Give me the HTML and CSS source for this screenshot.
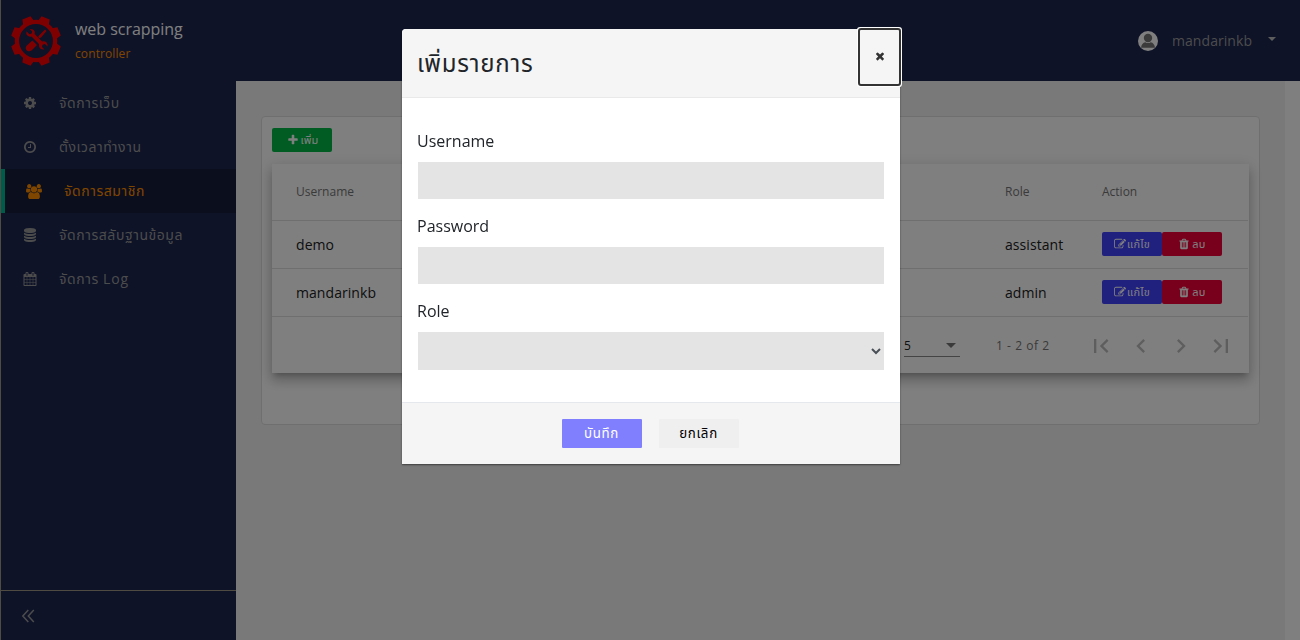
FILE: index.html
```html
<!DOCTYPE html>
<html lang="th">
<head>
<meta charset="utf-8">
<title>web scrapping</title>
<link rel="stylesheet" href="styles.css">
</head>
<body>
<svg class="defs" width="0" height="0">
  <symbol id="cog" viewBox="0 0 1792 1792"><path d="M1152 896q0-106-75-181t-181-75-181 75-75 181 75 181 181 75 181-75 75-181zm512-109v222q0 12-8 23t-20 13l-185 28q-19 54-39 91 35 50 107 138 10 12 10 25t-9 23q-27 37-99 108t-94 71q-12 0-26-9l-138-108q-44 23-91 38-16 136-29 186-7 28-36 28h-222q-14 0-24.5-8.5t-11.5-21.5l-28-184q-49-16-90-37l-141 107q-10 9-25 9-14 0-25-11-126-114-165-168-7-10-7-23 0-12 8-23 15-21 51-66.5t54-70.5q-27-50-41-99l-183-27q-13-2-21-12.5t-8-23.5v-222q0-12 8-23t19-13l186-28q14-46 39-92-40-57-107-138-10-12-10-24 0-10 9-23 26-36 98.5-107.5t94.5-71.5q13 0 26 10l138 107q44-23 91-38 16-136 29-186 7-28 36-28h222q14 0 24.5 8.5t11.5 21.5l28 184q49 16 90 37l142-107q9-9 24-9 13 0 25 10 129 119 165 170 7 8 7 22 0 12-8 23-15 21-51 66.5t-54 70.5q26 50 41 98l183 28q13 2 21 12.5t8 23.5z"/></symbol>
  <symbol id="clock" viewBox="0 0 1792 1792"><path d="M1024 544v448q0 14-9 23t-23 9h-320q-14 0-23-9t-9-23v-64q0-14 9-23t23-9h224v-352q0-14 9-23t23-9h64q14 0 23 9t9 23zm416 352q0-148-73-273t-198-198-273-73-273 73-198 198-73 273 73 273 198 198 273 73 273-73 198-198 73-273zm224 0q0 209-103 385.5t-279.5 279.5-385.5 103-385.5-103-279.5-279.5-103-385.5 103-385.5 279.5-279.5 385.5-103 385.5 103 279.5 279.5 103 385.5z"/></symbol>
  <symbol id="users" viewBox="-64 0 1920 1792"><path d="M529 896q-162 5-265 128h-134q-82 0-138-40.5t-56-118.5q0-353 124-353 6 0 43.5 21t97.5 42.5 119 21.5q67 0 133-23-5 37-5 66 0 139 81 256zm1071 637q0 120-73 189.5t-194 69.5h-874q-121 0-194-69.5t-73-189.5q0-53 3.5-103.5t14-109 26.5-108.5 43-97.5 62-81 85.5-53.5 111.5-20q10 0 43 21.5t73 48 107 48 135 21.5 135-21.5 107-48 73-48 43-21.5q61 0 111.5 20t85.5 53.5 62 81 43 97.5 26.5 108.5 14 109 3.5 103.5zm-1024-1277q0 106-75 181t-181 75-181-75-75-181 75-181 181-75 181 75 75 181zm704 384q0 159-112.5 271.5t-271.5 112.5-271.5-112.5-112.5-271.5 112.5-271.5 271.5-112.5 271.5 112.5 112.5 271.5zm576 225q0 78-56 118.5t-138 40.5h-134q-103-123-265-128 81-117 81-256 0-29-5-66 66 23 133 23 59 0 119-21.5t97.5-42.5 43.5-21q124 0 124 353zm-128-609q0 106-75 181t-181 75-181-75-75-181 75-181 181-75 181 75 75 181z"/></symbol>
  <symbol id="database" viewBox="0 0 1792 1792"><path d="M896 768q237 0 443-43t325-127v170q0 69-103 128t-280 93.5-385 34.5-385-34.5-280-93.5-103-128v-170q119 84 325 127t443 43zm0 768q237 0 443-43t325-127v170q0 69-103 128t-280 93.5-385 34.5-385-34.5-280-93.5-103-128v-170q119 84 325 127t443 43zm0-384q237 0 443-43t325-127v170q0 69-103 128t-280 93.5-385 34.5-385-34.5-280-93.5-103-128v-170q119 84 325 127t443 43zm0-1152q208 0 385 34.5t280 93.5 103 128v128q0 69-103 128t-280 93.5-385 34.5-385-34.5-280-93.5-103-128v-128q0-69 103-128t280-93.5 385-34.5z"/></symbol>
  <symbol id="calendar" viewBox="0 0 1792 1792"><path d="M192 1664h288v-288h-288v288zm352 0h320v-288h-320v288zm-352-352h288v-320h-288v320zm352 0h320v-320h-320v320zm-352-384h288v-288h-288v288zm736 736h320v-288h-320v288zm-384-736h320v-288h-320v288zm768 736h288v-288h-288v288zm-384-352h320v-320h-320v320zm-352-864v-288q0-13-9.5-22.5t-22.5-9.5h-64q-13 0-22.5 9.5t-9.5 22.5v288q0 13 9.5 22.5t22.5 9.5h64q13 0 22.5-9.5t9.5-22.5zm736 864h288v-320h-288v320zm-384-384h320v-288h-320v288zm384 0h288v-288h-288v288zm32-480v-288q0-13-9.5-22.5t-22.5-9.5h-64q-13 0-22.5 9.5t-9.5 22.5v288q0 13 9.5 22.5t22.5 9.5h64q13 0 22.5-9.5t9.5-22.5zm384-64v1280q0 52-38 90t-90 38h-1408q-52 0-90-38t-38-90v-1280q0-52 38-90t90-38h128v-96q0-66 47-113t113-47h64q66 0 113 47t47 113v96h384v-96q0-66 47-113t113-47h64q66 0 113 47t47 113v96h128q52 0 90 38t38 90z"/></symbol>
  <symbol id="plus" viewBox="0 0 1792 1792"><path d="M1600 736v192q0 40-28 68t-68 28h-416v416q0 40-28 68t-68 28h-192q-40 0-68-28t-28-68v-416h-416q-40 0-68-28t-28-68v-192q0-40 28-68t68-28h416v-416q0-40 28-68t68-28h192q40 0 68 28t28 68v416h416q40 0 68 28t28 68z"/></symbol>
  <symbol id="close" viewBox="0 0 1792 1792"><path d="M1490 1322q0 40-28 68l-136 136q-28 28-68 28t-68-28l-294-294-294 294q-28 28-68 28t-68-28l-136-136q-28-28-28-68t28-68l294-294-294-294q-28-28-28-68t28-68l136-136q28-28 68-28t68 28l294 294 294-294q28-28 68-28t68 28l136 136q28 28 28 68t-28 68l-294 294 294 294q28 28 28 68z"/></symbol>
  <symbol id="edit" viewBox="0 0 1792 1792"><path d="M888 1184l116-116-152-152-116 116v56h96v96h56zm440-720q-16-16-33 1l-350 350q-17 17-1 33t33-1l350-350q17-17 1-33zm80 594v190q0 119-84.5 203.5t-203.5 84.5h-832q-119 0-203.5-84.5t-84.5-203.5v-832q0-119 84.5-203.5t203.5-84.5h832q63 0 117 25 15 7 18 23 3 17-9 29l-49 49q-14 14-32 8-23-6-45-6h-832q-66 0-113 47t-47 113v832q0 66 47 113t113 47h832q66 0 113-47t47-113v-126q0-13 9-22l64-64q15-15 35-7t20 29zm-96-738l288 288-672 672h-288v-288zm444 132l-92 92-288-288 92-92q28-28 68-28t68 28l152 152q28 28 28 68t-28 68z"/></symbol>
  <symbol id="trash" viewBox="0 0 1792 1792"><path d="M704 1376v-704q0-14-9-23t-23-9h-64q-14 0-23 9t-9 23v704q0 14 9 23t23 9h64q14 0 23-9t9-23zm256 0v-704q0-14-9-23t-23-9h-64q-14 0-23 9t-9 23v704q0 14 9 23t23 9h64q14 0 23-9t9-23zm256 0v-704q0-14-9-23t-23-9h-64q-14 0-23 9t-9 23v704q0 14 9 23t23 9h64q14 0 23-9t9-23zm-544-992h448l-48-117q-7-9-17-11h-317q-10 2-17 11zm928 32v64q0 14-9 23t-23 9h-96v948q0 83-47 143.5t-113 60.5h-832q-66 0-113-58.5t-47-141.5v-952h-96q-14 0-23-9t-9-23v-64q0-14 9-23t23-9h309l70-167q15-37 54-63t79-26h320q40 0 79 26t54 63l70 167h309q14 0 23 9t9 23z"/></symbol>
</svg>

<div class="app">
  <header class="topbar">
    <div class="brand">
      <svg class="logo" viewBox="-25 -25 50 50">
        <circle class="ring" r="19.1"/>
        <path id="t" d="M-5.800-19.500L-4.400-25H4.400L5.800-19.500z" transform="rotate(22.5)"/>
        <use href="#t" transform="rotate(45)"/><use href="#t" transform="rotate(90)"/><use href="#t" transform="rotate(135)"/><use href="#t" transform="rotate(180)"/><use href="#t" transform="rotate(225)"/><use href="#t" transform="rotate(270)"/><use href="#t" transform="rotate(315)"/>
        <path d="M9-11.500L10.500-10 5.500-4 3.500-2.500 2-4 3.500-6zM-3.600-.6L1 4l-5.200 5.200q-2.600 2.200-5 .2-2.200-2.400 0-5z"/>
        <path class="wrench" d="M-9.500-9.800l3 3 2.200-.6.5-2.200-2.600-2.400q4.300-.4 5.200 3l-.2 1.900 7.500 7.500q2.700-.7 4.500 1.200 1.300 1.400 1 3.900l-2.700-2.500-2.400.7-.5 2.300 2.500 2.500q-3.200.2-4.600-1.300-1.600-1.700-.9-4.200l-7.500-7.500q-2.700.7-4.400-1.200-1.300-1.500-.6-4.100z"/>
      </svg>
      <div class="brand-text">
        <div class="brand-name">web scrapping</div>
        <div class="brand-sub">controller</div>
      </div>
    </div>
    <div class="user">
      <svg class="avatar" viewBox="0 0 20 20"><circle cx="10" cy="10" r="10" fill="#fff"/><path d="M3 16.800q.7-5 4.300-5.600 2.700 1.800 5.400 0 3.600.6 4.300 5.600z" fill="#777"/><circle cx="10" cy="7" r="4.200" fill="#777"/></svg>
      <span class="user-name">mandarinkb</span>
      <span class="caret"></span>
    </div>
  </header>

  <div class="shell">
    <nav class="sidebar">
      <a class="item"><svg class="nav-icon"><use href="#cog"/></svg><span>จัดการเว็บ</span></a>
      <a class="item"><svg class="nav-icon"><use href="#clock"/></svg><span>ตั้งเวลาทำงาน</span></a>
      <a class="item active"><svg class="nav-icon"><use href="#users"/></svg><span>จัดการสมาชิก</span></a>
      <a class="item"><svg class="nav-icon"><use href="#database"/></svg><span>จัดการสลับฐานข้อมูล</span></a>
      <a class="item"><svg class="nav-icon"><use href="#calendar"/></svg><span>จัดการ <span class="latin">Log</span></span></a>
      <div class="collapse"><svg class="stroke" width="14" height="14" viewBox="0 0 14 14"><path d="M7.300 1L1.800 7l5.500 6M12.800 1L7.300 7l5.500 6"/></svg></div>
    </nav>
    <main class="main">
      <section class="card">
        <button class="btn add"><svg class="bi"><use href="#plus"/></svg><span>เพิ่ม</span></button>
        <div class="table">
          <div class="row head"><span>Username</span><span>Role</span><span>Action</span></div>
          <div class="row"><span class="cell">demo</span><span class="cell">assistant</span><span class="actions"><button class="btn edit"><svg class="bi"><use href="#edit"/></svg><span>แก้ไข</span></button><button class="btn del"><svg class="bi"><use href="#trash"/></svg><span>ลบ</span></button></span></div>
          <div class="row"><span class="cell">mandarinkb</span><span class="cell">admin</span><span class="actions"><button class="btn edit"><svg class="bi"><use href="#edit"/></svg><span>แก้ไข</span></button><button class="btn del"><svg class="bi"><use href="#trash"/></svg><span>ลบ</span></button></span></div>
          <div class="pager">
            <div class="page-size"><span>5</span><i class="arrow"></i></div>
            <span class="range">1 - 2 of 2</span>
            <svg class="pg" viewBox="0 0 24 24"><path d="M18.410 16.590L13.820 12l4.590-4.590L17 6l-6 6 6 6zM6 6h2v12H6z"/></svg>
            <svg class="pg" viewBox="0 0 24 24"><path d="M15.410 7.410L14 6l-6 6 6 6 1.410-1.410L10.830 12z"/></svg>
            <svg class="pg" viewBox="0 0 24 24"><path d="M10 6L8.590 7.410 13.170 12l-4.580 4.590L10 18l6-6z"/></svg>
            <svg class="pg" viewBox="0 0 24 24"><path d="M5.590 7.410L10.180 12l-4.590 4.590L7 18l6-6-6-6zM16 6h2v12h-2z"/></svg>
          </div>
        </div>
      </section>
    </main>
  </div>
</div>

<div class="overlay">
  <div class="modal">
    <div class="modal-head">
      <h2>เพิ่มรายการ</h2>
      <button class="close"><svg width="12" height="12"><use href="#close"/></svg></button>
    </div>
    <div class="modal-body">
      <label>Username</label><div class="field"></div>
      <label>Password</label><div class="field"></div>
      <label>Role</label>
      <div class="field select"><svg class="chevron" width="10" height="7" viewBox="0 0 10 7"><path d="M1 1l4 4 4-4"/></svg></div>
    </div>
    <div class="modal-foot">
      <button class="mbtn save">บันทึก</button>
      <button class="mbtn cancel">ยกเลิก</button>
    </div>
  </div>
</div>
</body>
</html>
```
FILE: styles.css
```css
* { box-sizing: border-box; }
body { margin: 0; height: 640px; overflow: hidden; font-family: "Open Sans", "Noto Sans Thai", "Noto Sans", sans-serif; font-size: 14px; background: #fff; color: #212529; }
.defs { position: absolute; }
button { font-family: inherit; border: 0; padding: 0; margin: 0; }
svg { fill: currentColor; flex: none; }
.app { display: flex; flex-direction: column; height: 640px; border-left: 1px solid #9e9684; }
.topbar { height: 81px; flex: none; background: #1c2650; display: flex; justify-content: space-between; align-items: center; }
.brand { display: flex; padding: 1px 0 0 10px; gap: 14px; }
.logo { width: 50px; height: 50px; color: #f00; }
.ring { fill: none; stroke: #f00; stroke-width: 4.4px; }
.wrench { stroke: #1c2650; stroke-width: .8px; paint-order: stroke; }
.brand-text { display: flex; flex-direction: column; gap: 1px; padding-top: 1px; line-height: 24px; }
.brand-name { color: #fff; font-size: 16px; letter-spacing: -.03px; }
.brand-sub { color: #ff8c00; font-size: 12px; letter-spacing: .1px; }
.user { display: flex; align-items: center; color: #999; padding-right: 24px; }
.avatar { width: 20px; height: 20px; margin-right: 14px; }
.user-name { width: 80px; margin-top: -1px; letter-spacing: .06px; }
.caret { border: 4px solid transparent; border-top-color: #bbb; border-bottom: 0; margin-left: 16px; margin-bottom: 3px; }
.shell { display: flex; flex: 1; }
.sidebar { width: 235px; flex: none; background: #1c2650; color: #999; display: flex; flex-direction: column; }
.item { height: 44px; display: flex; align-items: center; padding-left: 22px; gap: 22px; white-space: nowrap; letter-spacing: .56px; }
.latin { letter-spacing: .9px; }
.nav-icon { width: 14px; height: 14px; }
.active .nav-icon { width: 16px; height: 15px; }
.active { background: #171d3a; color: #ff8c00; border-left: 4px solid #00b894; padding-left: 21px; }
.collapse { margin-top: auto; height: 50px; border-top: 1px solid #9e9684; padding: 18px 20px; }
.collapse svg { display: block; }
.stroke { fill: none; stroke: currentColor; stroke-width: 1.5px; }
.main { flex: 1; margin-right: 15px; background: #f3f3f3; padding: 35px 25px; }
.card { width: 999px; height: 309px; background: #fff; border: 1px solid #dfdfdf; border-radius: 4px; padding: 11px 10px; }
.btn { width: 60px; height: 24px; display: flex; align-items: center; justify-content: center; gap: 1px; color: #fff; font-size: 11px; line-height: 16px; letter-spacing: .2px; border-radius: 2px; padding-bottom: 1px; }
.bi { width: 12px; height: 12px; }
.add { background: #00b845; padding-left: 2px; }
.edit { background: #4040ff; }
.del { background: #f00038; gap: 2px; }
.table { margin-top: 12px; width: 977px; height: 209px; background: #fff; box-shadow: 0 5px 5px -3px rgba(0,0,0,.2), 0 8px 10px 1px rgba(0,0,0,.14), 0 3px 14px 2px rgba(0,0,0,.12); }
.row { height: 48px; display: grid; grid-template-columns: 709px 97px 122px; align-items: center; padding-left: 24px; border-bottom: 1px solid #dfdfdf; color: #212121; margin-right: 1px; }
.cell { margin-top: -1px; letter-spacing: .06px; }
.head { height: 57px; font-size: 12px; color: #757575; padding-bottom: 2px; }
.actions { display: flex; margin-top: -1px; }
.pager { height: 56px; display: flex; align-items: center; justify-content: flex-end; padding-right: 8px; color: #757575; font-size: 12px; }
.page-size { width: 56px; height: 23px; margin-top: 1px; border-bottom: 1px solid #888; display: flex; justify-content: space-between; align-items: center; color: #222; padding-right: 4px; margin-right: 36px; }
.arrow { border: 5px solid transparent; border-top-color: #757575; border-bottom: 0; }
.range { width: 54px; margin-right: 31px; white-space: nowrap; letter-spacing: .55px; }
.pg { width: 28px; height: 28px; margin: 1px 6px 0; color: #bdbdbd; }
.overlay { position: fixed; inset: 0; background: rgba(0,0,0,.5); padding: 29px 0 0 402px; }
.modal { width: 498px; height: 435px; background: #fff; border-radius: 4px 4px 0 0; box-shadow: 0 1px 2px rgba(0,0,0,.5); display: flex; flex-direction: column; }
.modal-head { height: 69px; background: #f5f5f5; border-bottom: 1px solid #e9e9e9; border-radius: 4px 4px 0 0; display: flex; justify-content: space-between; padding-left: 15px; }
.modal-head h2 { margin: 16px 0 0; font-size: 24px; line-height: 36px; font-weight: 400; letter-spacing: .75px; }
.close { width: 39px; height: 54px; margin: 1px 1px 0 0; background: #f5f5f5; color: #333; border-radius: 1px; outline: 2px solid #333; box-shadow: 0 0 0 3px #fff; }
.modal-body { flex: 1; padding: 31px 16px 0; display: flex; flex-direction: column; }
.modal-body label { font-size: 16px; line-height: 24px; margin: 0 0 9px -1px; }
.field { height: 37px; flex: none; background: #e4e4e4; margin-bottom: 15px; }
.select { height: 38px; display: flex; align-items: center; justify-content: flex-end; padding-right: 3px; }
.chevron { fill: none; stroke: #495057; stroke-width: 2px; }
.modal-foot { height: 62px; background: #f5f5f5; border-top: 1px solid #e5e9ee; display: flex; justify-content: center; gap: 17px; padding: 16px 2px 0 0; }
.mbtn { width: 80px; height: 29px; font-size: 13.330px; letter-spacing: .65px; border-radius: 1px; }
.save { background: #8080ff; color: #fff; }
.cancel { background: #efefef; color: #000; }
```
